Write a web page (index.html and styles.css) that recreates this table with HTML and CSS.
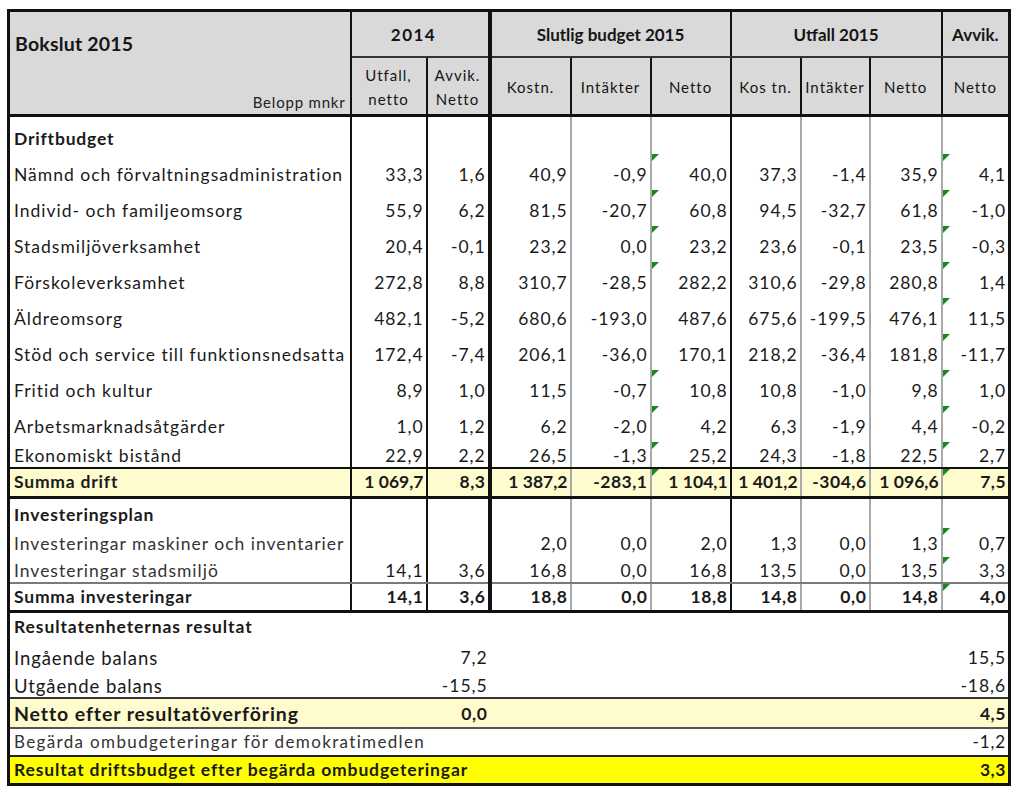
FILE: index.html
```html
<!DOCTYPE html>
<html lang="sv">
<head>
<meta charset="utf-8">
<title>Bokslut 2015</title>
<link rel="stylesheet" href="styles.css">
</head>
<body>
<table class="sheet">
  <colgroup>
    <col class="c-label">
    <col class="c-u14">
    <col class="c-a14">
    <col class="c-k">
    <col class="c-i">
    <col class="c-n">
    <col class="c-k2">
    <col class="c-i2">
    <col class="c-n2">
    <col class="c-av">
  </colgroup>
  <thead>
    <tr class="h1">
      <th class="title" rowspan="2">
        <div class="title-box">
          <span class="title-main">Bokslut 2015</span>
          <span class="unit">Belopp mnkr</span>
        </div>
      </th>
      <th class="grp wide" colspan="2">2014</th>
      <th class="grp" colspan="3">Slutlig budget 2015</th>
      <th class="grp" colspan="3">Utfall 2015</th>
      <th class="grp">Avvik.</th>
    </tr>
    <tr class="h2">
      <th class="sub">Utfall,<br>netto</th>
      <th class="sub">Avvik.<br>Netto</th>
      <th class="sub">Kostn.</th>
      <th class="sub soft">Intäkter</th>
      <th class="sub soft">Netto</th>
      <th class="sub">Kos tn.</th>
      <th class="sub soft">Intäkter</th>
      <th class="sub soft">Netto</th>
      <th class="sub">Netto</th>
    </tr>
  </thead>
  <tbody>
    <tr class="r sect">
      <td class="lbl b">Driftbudget</td><td></td><td></td><td></td><td></td><td></td><td></td><td></td><td></td><td></td>
    </tr>
    <tr class="r tall">
      <td class="lbl">Nämnd och förvaltningsadministration</td><td>33,3</td><td>1,6</td><td>40,9</td><td>-0,9</td><td class="flag">40,0</td><td>37,3</td><td>-1,4</td><td>35,9</td><td class="flag">4,1</td>
    </tr>
    <tr class="r tall">
      <td class="lbl">Individ- och familjeomsorg</td><td>55,9</td><td>6,2</td><td>81,5</td><td>-20,7</td><td class="flag">60,8</td><td>94,5</td><td>-32,7</td><td>61,8</td><td class="flag">-1,0</td>
    </tr>
    <tr class="r tall">
      <td class="lbl">Stadsmiljöverksamhet</td><td>20,4</td><td>-0,1</td><td>23,2</td><td>0,0</td><td class="flag">23,2</td><td>23,6</td><td>-0,1</td><td>23,5</td><td class="flag">-0,3</td>
    </tr>
    <tr class="r tall">
      <td class="lbl">Förskoleverksamhet</td><td>272,8</td><td>8,8</td><td>310,7</td><td>-28,5</td><td class="flag">282,2</td><td>310,6</td><td>-29,8</td><td>280,8</td><td class="flag">1,4</td>
    </tr>
    <tr class="r tall">
      <td class="lbl">Äldreomsorg</td><td>482,1</td><td>-5,2</td><td>680,6</td><td>-193,0</td><td>487,6</td><td>675,6</td><td>-199,5</td><td>476,1</td><td class="flag">11,5</td>
    </tr>
    <tr class="r tall">
      <td class="lbl">Stöd och service till funktionsnedsatta</td><td>172,4</td><td>-7,4</td><td>206,1</td><td>-36,0</td><td>170,1</td><td>218,2</td><td>-36,4</td><td>181,8</td><td class="flag">-11,7</td>
    </tr>
    <tr class="r tall">
      <td class="lbl">Fritid och kultur</td><td>8,9</td><td>1,0</td><td>11,5</td><td>-0,7</td><td class="flag">10,8</td><td>10,8</td><td>-1,0</td><td>9,8</td><td class="flag">1,0</td>
    </tr>
    <tr class="r tall">
      <td class="lbl">Arbetsmarknadsåtgärder</td><td>1,0</td><td>1,2</td><td>6,2</td><td>-2,0</td><td class="flag">4,2</td><td>6,3</td><td>-1,9</td><td>4,4</td><td class="flag">-0,2</td>
    </tr>
    <tr class="r short">
      <td class="lbl">Ekonomiskt bistånd</td><td>22,9</td><td>2,2</td><td>26,5</td><td>-1,3</td><td class="flag">25,2</td><td>24,3</td><td>-1,8</td><td>22,5</td><td class="flag">2,7</td>
    </tr>
    <tr class="r total">
      <td class="lbl">Summa drift</td><td>1&#8239;069,7</td><td>8,3</td><td>1&#8239;387,2</td><td>-283,1</td><td class="flag">1&#8239;104,1</td><td>1&#8239;401,2</td><td>-304,6</td><td>1&#8239;096,6</td><td class="flag">7,5</td>
    </tr>
    <tr class="r inv-head">
      <td class="lbl b">Investeringsplan</td><td></td><td></td><td></td><td></td><td></td><td></td><td></td><td></td><td></td>
    </tr>
    <tr class="r inv1">
      <td class="lbl light">Investeringar maskiner och inventarier</td><td></td><td></td><td>2,0</td><td>0,0</td><td>2,0</td><td>1,3</td><td>0,0</td><td>1,3</td><td class="flag">0,7</td>
    </tr>
    <tr class="r inv2">
      <td class="lbl light">Investeringar stadsmiljö</td><td>14,1</td><td>3,6</td><td>16,8</td><td>0,0</td><td>16,8</td><td>13,5</td><td>0,0</td><td>13,5</td><td class="flag">3,3</td>
    </tr>
    <tr class="r inv-total">
      <td class="lbl">Summa investeringar</td><td>14,1</td><td>3,6</td><td>18,8</td><td>0,0</td><td>18,8</td><td>14,8</td><td>0,0</td><td>14,8</td><td class="flag">4,0</td>
    </tr>
    <tr class="open res-head">
      <td class="lbl b" colspan="3">Resultatenheternas resultat</td><td class="gap" colspan="6"></td><td class="val"></td>
    </tr>
    <tr class="open res-in">
      <td class="lbl big" colspan="2">Ingående balans</td><td class="val">7,2</td><td class="gap" colspan="6"></td><td class="val">15,5</td>
    </tr>
    <tr class="open res-out">
      <td class="lbl big" colspan="2">Utgående balans</td><td class="val">-15,5</td><td class="gap" colspan="6"></td><td class="val">-18,6</td>
    </tr>
    <tr class="open net">
      <td class="lbl" colspan="2">Netto efter resultatöverföring</td><td class="val">0,0</td><td class="gap" colspan="6"></td><td class="val">4,5</td>
    </tr>
    <tr class="open req">
      <td class="lbl light" colspan="3">Begärda ombudgeteringar för demokratimedlen</td><td class="gap" colspan="6"></td><td class="val">-1,2</td>
    </tr>
    <tr class="open final">
      <td class="lbl" colspan="3">Resultat driftsbudget efter begärda ombudgeteringar</td><td class="gap" colspan="6"></td><td class="val">3,3</td>
    </tr>
  </tbody>
</table>
</body>
</html>
```

FILE: styles.css
```css
html, body {
  margin: 0;
  padding: 0;
  background: #ffffff;
}

body {
  padding: 9px 0 0 7px;
  font-family: Lato, "Open Sans", "DejaVu Sans", sans-serif;
  color: #1a1a1a;
}

.sheet {
  border-collapse: collapse;
  table-layout: fixed;
  width: 1004px;
  border: 3px solid #111;
}

/* column widths and body grid lines */
.c-label { width: 342px; border-right: 2px solid #111; }
.c-u14   { width: 76px;  border-right: 2px solid #111; }
.c-a14   { width: 63px;  border-right: 4px solid #111; }
.c-k     { width: 81px;  border-right: 2px solid #a9a9a9; }
.c-i     { width: 80px;  border-right: 2px solid #a9a9a9; }
.c-n     { width: 80px;  border-right: 2px solid #111; }
.c-k2    { width: 70px;  border-right: 2px solid #a9a9a9; }
.c-i2    { width: 69px;  border-right: 2px solid #a9a9a9; }
.c-n2    { width: 72px;  border-right: 2px solid #a9a9a9; }
.c-av    { width: 68px; }

/* ---------- header ---------- */
thead th {
  background: #d9d9d9;
  color: #151515;
  padding: 0;
  white-space: nowrap;
}

.h1 { height: 46px; }
.h2 { height: 58px; border-bottom: 3px solid #111; }

.title {
  text-align: left;
  vertical-align: top;
  border-right: 2px solid #111;
}

.title-box {
  height: 102px;
  display: flex;
  flex-direction: column;
  justify-content: space-between;
}

.title-main {
  font-size: 19.5px;
  font-weight: 700;
  padding: 20px 0 0 5px;
  letter-spacing: 0.2px;
}

.unit {
  align-self: flex-end;
  font-size: 15px;
  font-weight: 400;
  letter-spacing: 0.8px;
  padding: 0 4px 3px 0;
  color: #222;
}

.grp {
  font-size: 17px;
  font-weight: 700;
  text-align: center;
  vertical-align: middle;
  border-bottom: 2px solid #333;
  border-right: 2px solid #111;
  padding-top: 2px;
}

.grp.wide {
  letter-spacing: 1.5px;
  padding-right: 12px;
}

.sub {
  font-size: 15px;
  font-weight: 400;
  text-align: center;
  vertical-align: middle;
  letter-spacing: 1px;
  line-height: 24px;
  border-right: 2px solid #111;
  padding-top: 2px;
}

.sub.soft { border-left: 2px solid #555; }

/* ---------- body ---------- */
tbody td {
  padding: 0 2px 5px 0;
  font-size: 17.5px;
  letter-spacing: 0.95px;
  text-align: right;
  vertical-align: bottom;
  white-space: nowrap;
  line-height: 20px;
  color: #1a1a1a;
}

tbody td.lbl {
  text-align: left;
  padding-left: 4px;
  letter-spacing: 1px;
}

.b { font-weight: 700; }
tbody td.lbl.b { letter-spacing: 0.8px; }
.light { color: #333; }

.sect { height: 38px; }
.tall { height: 36px; }
.short { height: 26px; }
.short td { padding-bottom: 1px; }

.total {
  height: 30px;
  background: #fefbcf;
  border-top: 2px solid #111;
  border-bottom: 3px solid #111;
}
.total td { font-weight: 700; padding-bottom: 4px; letter-spacing: 0.5px; }
.total td.lbl { letter-spacing: 0.8px; }

.inv-head { height: 30px; }
.inv-head td { padding-bottom: 3px; }
.inv1 { height: 29px; }
.inv1 td { padding-bottom: 3px; }
.inv2 { height: 26px; }
.inv2 td { padding-bottom: 1px; }

.inv-total {
  height: 29px;
  border-top: 2px solid #7a7a7a;
  border-bottom: 3px solid #111;
}
.inv-total td { font-weight: 700; padding-bottom: 3px; letter-spacing: 0.6px; }
.inv-total td.lbl { letter-spacing: 0.8px; }

/* result section: merged cells, no inner vertical lines */
.open .gap { border-left: hidden; border-right: hidden; }
.open .val { border-left: hidden; }

.res-head { height: 30px; }
.res-head td { padding-bottom: 5px; }
.res-head td.lbl.b { letter-spacing: 0.9px; }
.res-in { height: 30px; }
.res-in td { padding-bottom: 4px; }
.res-out { height: 26px; }
.res-out td { padding-bottom: 1px; }
td.lbl.big { font-size: 18.5px; letter-spacing: 0.9px; }

.net {
  height: 30px;
  background: #fefbcf;
  border-top: 2px solid #333;
  border-bottom: 2px solid #555;
}
.net td { font-weight: 700; padding-bottom: 3px; letter-spacing: 0.6px; }
.net td.lbl { font-size: 19.5px; letter-spacing: 0.9px; }

.req { height: 28px; }
.req td { font-size: 17px; padding-bottom: 3px; }
.req td.lbl { letter-spacing: 1.35px; }

.final {
  height: 29px;
  background: #ffff00;
  border-top: 2px solid #222;
}
.final td { font-weight: 700; padding-bottom: 3px; letter-spacing: 0.6px; }
.final td.lbl { letter-spacing: 0.85px; }

/* green error-check markers in the top-left corner of a cell */
td.flag { position: relative; }
td.flag::before {
  content: "";
  position: absolute;
  top: 0;
  left: 0;
  border-top: 7px solid #178a17;
  border-right: 7px solid transparent;
}
```
